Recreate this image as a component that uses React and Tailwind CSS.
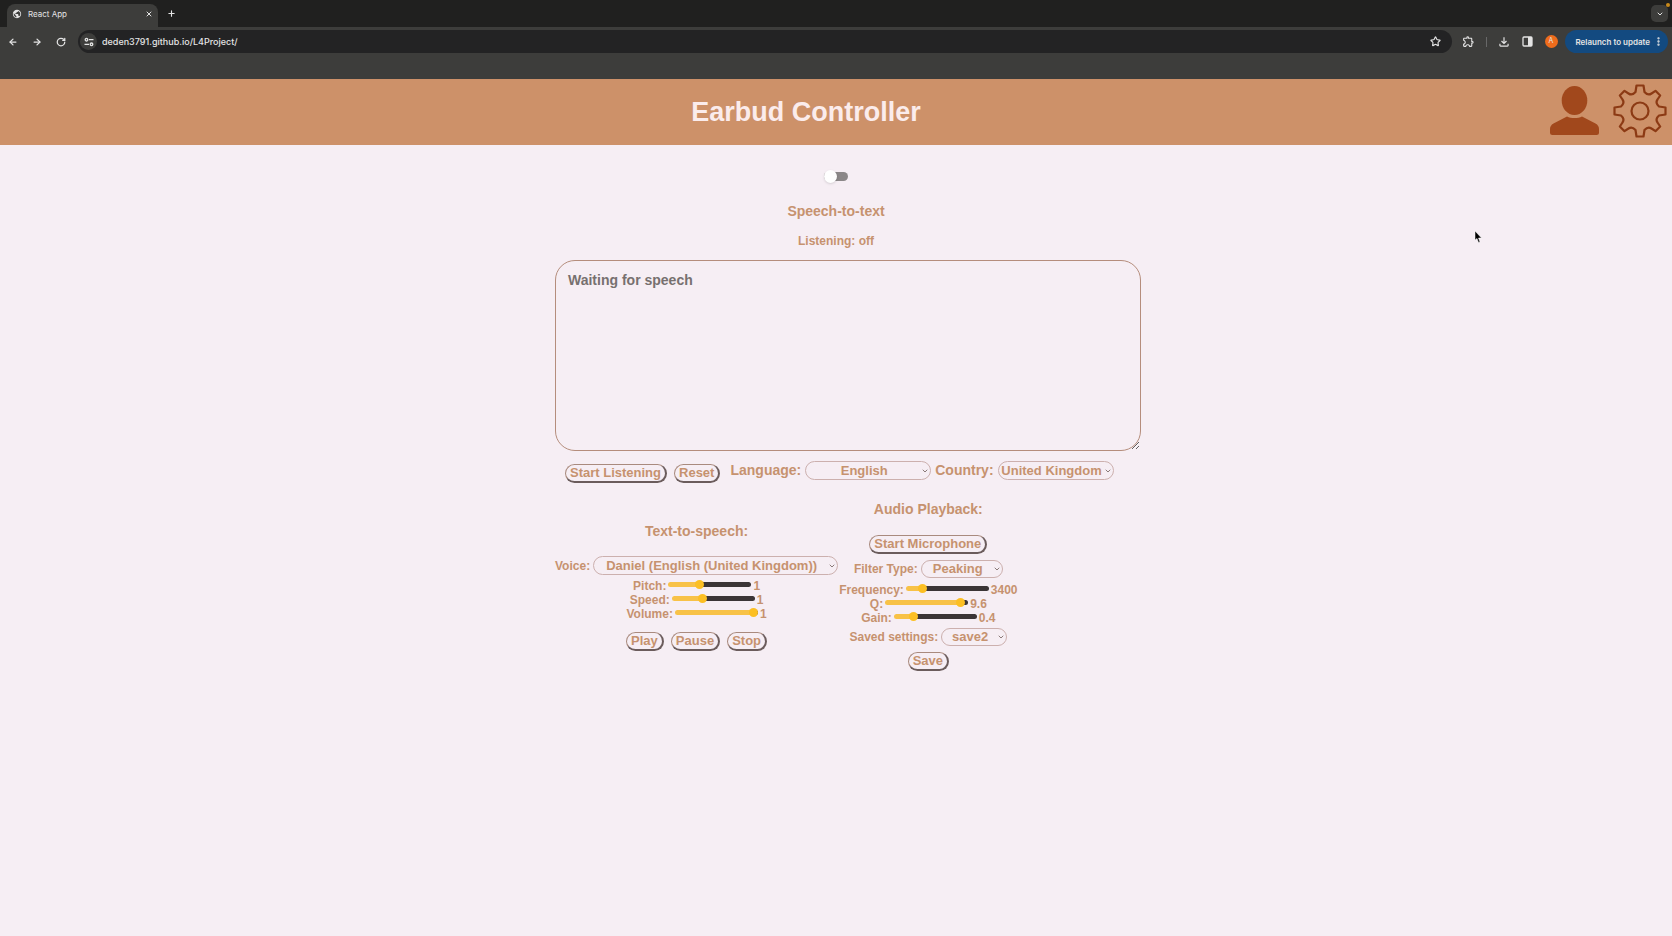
import { useState } from "react";
import { ArrowLeft, ArrowRight, RotateCw, Star, EllipsisVertical, ChevronDown, Plus, X } from "lucide-react";
import { MdOutlineExtension, MdOutlineFileDownload, MdPublic } from "react-icons/md";

const buttonClass =
  "h-[19px] rounded-full border border-[#a98a7e] border-r-2 border-b-2 border-r-[#6b5c5c] border-b-[#6b5c5c] px-1 text-[13px] leading-4 font-bold text-[#c6926f]";

function Button({ children }) {
  return <button type="button" className={buttonClass}>{children}</button>;
}

function Select({ id, width, value, small }) {
  return (
    <span className={`relative inline-flex items-center ${width}`}>
      <select
        id={id}
        defaultValue={value}
        className={`w-full appearance-none rounded-full border border-[#ccb0ae] bg-transparent pr-2 text-center text-[13px] leading-4 font-bold text-[#c6926f] [text-align-last:center] ${small ? "h-[18px]" : "h-[19px]"}`}
      >
        <option>{value}</option>
      </select>
      <ChevronDown className="pointer-events-none absolute right-[2px] size-2 text-[#8a7a78]" strokeWidth={3} />
    </span>
  );
}

function SliderRow({ id, label, min, max, step, initial }) {
  const [value, setValue] = useState(initial);
  const ratio = (value - min) / (max - min);
  const fill = `calc(${ratio * 100}% + ${Math.round(4 - ratio * 8)}px)`;
  return (
    <div className="flex h-[14px] items-center justify-center gap-[2px] text-xs leading-[14px] font-bold text-[#c6926f]">
      <label htmlFor={id}>{label}:</label>
      <input
        id={id}
        type="range"
        min={min}
        max={max}
        step={step}
        value={value}
        onChange={(e) => setValue(Number(e.target.value))}
        style={{ backgroundImage: `linear-gradient(to right, #f8c247 ${fill}, #3b3536 ${fill})` }}
        className="mb-[3px] h-[5px] w-[83px] appearance-none rounded-full [&::-webkit-slider-thumb]:size-[9px] [&::-webkit-slider-thumb]:appearance-none [&::-webkit-slider-thumb]:rounded-full [&::-webkit-slider-thumb]:bg-[#fcbf23]"
      />
      <output htmlFor={id}>{value}</output>
    </div>
  );
}

function SiteInfoIcon() {
  return (
    <svg viewBox="0 0 10 10" className="size-[10px] fill-none stroke-current" strokeWidth="1.3" aria-hidden="true">
      <circle cx="2.500" cy="2.700" r="1.300" />
      <path d="M5 2.700 H9.500 M0.500 7.300 H5" />
      <circle cx="7.500" cy="7.300" r="1.300" />
    </svg>
  );
}

function SidePanelIcon() {
  return (
    <svg viewBox="0 0 11 11" className="size-[11px]" aria-hidden="true">
      <rect x="1" y="1" width="9" height="9" rx="1" className="fill-none stroke-current" strokeWidth="1.3" />
      <path d="M6 1 H10 V10 H6 Z" className="fill-current" />
    </svg>
  );
}

function BrowserChrome() {
  return (
    <div className="bg-[#3d3d3b] font-[Inter,sans-serif] text-[#e4e4e4]">
      <div className="flex h-[27px] items-end bg-[#20201f]">
        <div className="ml-[7px] flex h-[23px] w-[151px] items-center rounded-t-lg bg-[#3d3d3b] px-[5px] pb-1 text-[8px]">
          <MdPublic className="size-[10px]" />
          <span className="ml-[6px] flex-1">React App</span>
          <button type="button" aria-label="Close tab"><X className="size-2" strokeWidth={3} /></button>
        </div>
        <button type="button" aria-label="New tab" className="mb-[9px] ml-[9px]"><Plus className="size-[9px]" strokeWidth={3} /></button>
        <button type="button" aria-label="Search tabs" className="relative mr-1 mb-[5px] ml-auto flex size-[17px] items-center justify-center rounded-[5px] bg-[#3d3d3b]">
          <ChevronDown className="size-2" strokeWidth={3} />
          <span className="absolute -top-[2px] -right-[2px] size-1 rounded-full bg-[#c98a1a]" />
        </button>
      </div>
      <div className="flex h-[52px] items-start pt-[3px] pr-1 pl-2">
        <div className="flex h-[23px] items-center gap-[14px]">
          <button type="button" aria-label="Back"><ArrowLeft className="size-[10px]" strokeWidth={3} /></button>
          <button type="button" aria-label="Forward"><ArrowRight className="size-[10px]" strokeWidth={3} /></button>
          <button type="button" aria-label="Reload"><RotateCw className="size-[10px]" strokeWidth={3} /></button>
        </div>
        <div className="ml-3 flex h-[23px] flex-1 items-center rounded-full bg-[#232324] pr-[11px] pl-[2px]">
          <span className="flex size-[17px] items-center justify-center rounded-full bg-[#3d3d3b]">
            <SiteInfoIcon />
          </span>
          <input aria-label="Address" defaultValue="deden3791.github.io/L4Project/" className="ml-[5px] min-w-0 flex-1 bg-transparent text-[9px] font-medium" />
          <Star className="size-[11px]" strokeWidth={2.5} />
        </div>
        <div className="flex h-[23px] items-center">
          <MdOutlineExtension className="ml-[10px] size-[13px]" />
          <span className="ml-[11px] h-[10px] w-px bg-[#686868]" />
          <MdOutlineFileDownload className="ml-[10px] size-[14px]" />
          <span className="ml-[11px]"><SidePanelIcon /></span>
          <span className="ml-3 flex size-[13px] items-center justify-center rounded-full bg-[#ee6c1c] text-[7px]">A</span>
          <button type="button" className="ml-[7px] flex h-[23px] items-center rounded-full bg-[#134a80] pr-1 pl-[11px] text-[8px] font-semibold">
            Relaunch to update
            <EllipsisVertical className="ml-[3px] size-[11px]" strokeWidth={3} />
          </button>
        </div>
      </div>
    </div>
  );
}

function PersonIcon() {
  return (
    <svg viewBox="0 0 49 49" className="size-[49px] fill-[#a1481c]" aria-hidden="true">
      <ellipse cx="24.500" cy="14.500" rx="12.800" ry="14.500" />
      <path d="M17 30.500 C21 32.500 28 32.500 32 30.500 L45.500 37.500 Q49 39.500 49 43 V46.500 Q49 49 46.500 49 H2.500 Q0 49 0 46.500 V43 Q0 39.500 3.500 37.500 Z" />
    </svg>
  );
}

function GearIcon() {
  return (
    <svg viewBox="0 0 54 54" className="size-[54px] fill-none stroke-[#8c3a14]" strokeWidth="2.200" strokeLinejoin="round" aria-hidden="true">
      <path d="M23.500 1.500 H30.500 L31.500 8 Q35 12 38.500 9.500 L42.500 6.800 L47.200 11.500 L44.500 15.500 Q42 19 46 22.500 L52.500 23.500 V30.500 L46 31.500 Q42 35 44.500 38.500 L47.200 42.500 L42.500 47.200 L38.500 44.500 Q35 42 31.500 46 L30.500 52.500 H23.500 L22.500 46 Q19 42 15.500 44.500 L11.500 47.200 L6.800 42.500 L9.500 38.500 Q12 35 8 31.500 L1.500 30.500 V23.500 L8 22.500 Q12 19 9.500 15.500 L6.800 11.500 L11.500 6.800 L15.500 9.500 Q19 12 22.500 8 Z" />
      <circle cx="27" cy="27" r="8.500" />
    </svg>
  );
}

export default function App() {
  return (
    <div className="min-h-screen bg-[#f6eef4] font-['Liberation_Sans',Arial,sans-serif] text-[#c6926f]">
      <BrowserChrome />
      <header className="grid h-[66px] grid-cols-[1fr_auto_1fr] items-center bg-[#cd9169]">
        <span />
        <h1 className="mr-[60px] text-[27px] font-bold text-[#fbecec]">Earbud Controller</h1>
        <div className="flex items-center justify-end gap-[14px] pr-[5px] pb-[3px]">
          <button type="button" aria-label="Profile"><PersonIcon /></button>
          <button type="button" aria-label="Settings"><GearIcon /></button>
        </div>
      </header>

      <main className="relative flex flex-col items-center pt-[24px] font-bold">
        <label className="relative flex h-[14px] w-6 items-center">
          <input type="checkbox" role="switch" aria-label="Dark mode" className="peer h-[9px] w-6 appearance-none rounded-full bg-[#8b8788]" />
          <span className="pointer-events-none absolute left-0 size-[13px] rounded-full bg-white shadow-sm peer-checked:left-3" />
        </label>
        <h2 className="mt-[20px] text-sm leading-4">Speech-to-text</h2>
        <p className="mt-[14px] text-xs leading-4">Listening: off</p>

        <div className="mt-[11px] ml-6 w-[586px]">
          <textarea
            aria-label="Transcript"
            placeholder="Waiting for speech"
            className="block h-[191px] w-full rounded-[20px] border border-[#b58d7c] bg-transparent px-3 py-[10px] text-sm leading-[18px] font-bold placeholder:text-[#77706f]"
          />
          <div className="mt-[10px] flex items-start pl-[10px] text-sm leading-[19px]">
            <div className="mt-[3px] flex gap-[7px]">
              <Button>Start Listening</Button>
              <Button>Reset</Button>
            </div>
            <label htmlFor="language" className="mr-1 ml-[10px]">Language:</label>
            <Select id="language" width="w-[126px]" value="English" />
            <label htmlFor="country" className="mr-1 ml-1">Country:</label>
            <Select id="country" width="w-[116px]" value="United Kingdom" />
          </div>

          <div className="mt-[18px] flex items-start gap-px">
            <section className="mt-[22px] flex flex-col items-center">
              <h2 className="text-sm leading-4">Text-to-speech:</h2>
              <div className="mt-[17px] mb-[4px] flex items-center gap-[3px] text-xs">
                <label htmlFor="voice">Voice:</label>
                <Select id="voice" width="w-[245px]" value="Daniel (English (United Kingdom))" />
              </div>
              <SliderRow id="pitch" label="Pitch" min={0} max={2.8} step={0.1} initial={1} />
              <SliderRow id="speed" label="Speed" min={0} max={2.8} step={0.1} initial={1} />
              <SliderRow id="volume" label="Volume" min={0} max={1} step={0.1} initial={1} />
              <div className="mt-[11px] flex gap-[7px]">
                <Button>Play</Button>
                <Button>Pause</Button>
                <Button>Stop</Button>
              </div>
            </section>
            <section className="flex flex-col items-center">
              <h2 className="text-sm leading-4">Audio Playback:</h2>
              <div className="mt-[18px] flex"><Button>Start Microphone</Button></div>
              <div className="mt-[6px] mb-[5px] flex items-center gap-[3px] text-xs">
                <label htmlFor="filter">Filter Type:</label>
                <Select id="filter" width="w-[82px]" value="Peaking" small />
              </div>
              <SliderRow id="frequency" label="Frequency" min={0} max={20000} step={100} initial={3400} />
              <SliderRow id="q" label="Q" min={0} max={10} step={0.1} initial={9.6} />
              <SliderRow id="gain" label="Gain" min={0} max={2} step={0.1} initial={0.4} />
              <div className="mt-[3px] flex items-center gap-[3px] text-xs">
                <label htmlFor="saved">Saved settings:</label>
                <Select id="saved" width="w-[66px]" value="save2" small />
              </div>
              <div className="mt-[6px] flex"><Button>Save</Button></div>
            </section>
          </div>
        </div>
        <svg viewBox="0 0 8 12" className="absolute top-[86px] right-[190px] h-3 w-2" aria-hidden="true">
          <path d="M1 0 V9 L3 7.500 L4.500 11.500 L6 11 L4.500 7 H7.500 Z" className="fill-black stroke-white stroke-[0.5]" />
        </svg>
      </main>
    </div>
  );
}
